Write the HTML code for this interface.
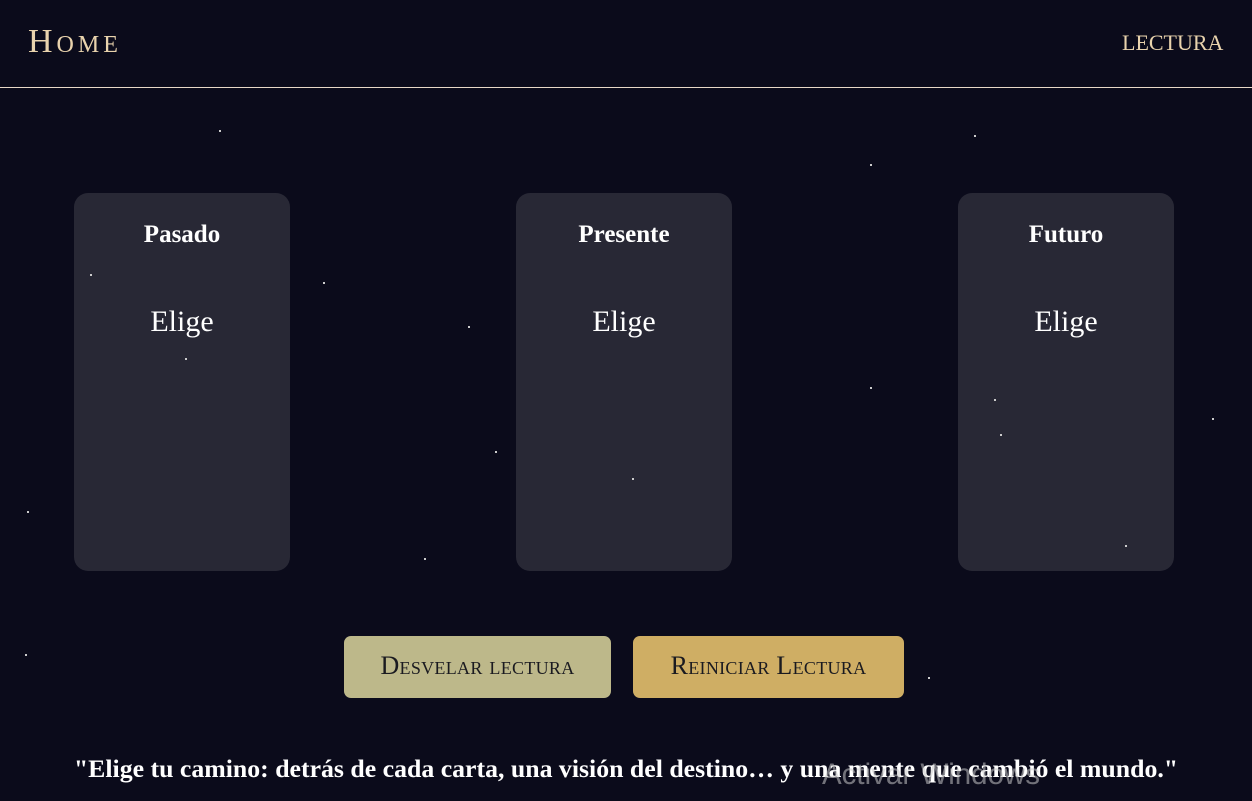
<!DOCTYPE html>
<html><head><meta charset="utf-8"><style>
body{margin:0;width:1252px;height:801px;background:#0b0b1b;overflow:hidden;position:relative;font-family:"Liberation Serif",serif;}
.nav{position:absolute;left:0;top:0;width:1252px;height:87px;border-bottom:1px solid #e8d9c8;}
.home{position:absolute;left:28px;top:23px;font-size:34px;color:#e9d3ad;font-variant:small-caps;letter-spacing:4px}
.lect{position:absolute;left:1122px;top:30px;font-size:22px;color:#e9d3ad;font-variant:small-caps;}
.card{position:absolute;top:193px;width:216px;height:378px;background:#282835;border-radius:14px;color:#fff;text-align:center}
.card h3{margin:0;position:absolute;top:28px;width:100%;font-size:25px;font-weight:bold}
.card p{margin:0;position:absolute;top:112px;width:100%;font-size:30px}
.btn{position:absolute;top:636px;height:62px;border-radius:7px;font-variant:small-caps;font-size:26px;color:#1a1a20;line-height:60px;text-align:center;letter-spacing:.3px}
.q{position:absolute;top:754px;width:100%;text-align:center;color:#fff;font-weight:bold;font-size:25.8px}
.w{position:absolute;left:822px;top:758px;font-family:"Liberation Sans",sans-serif;font-size:29.5px;color:rgba(200,200,200,.55)}
.s{position:absolute;width:2px;height:2px;background:#ccc}
</style></head><body>
<div class="nav"><div class="home">Home</div><div class="lect">LECTURA</div></div>
<div class="card" style="left:74px"><h3>Pasado</h3><p>Elige</p></div>
<div class="card" style="left:516px"><h3>Presente</h3><p>Elige</p></div>
<div class="card" style="left:958px"><h3>Futuro</h3><p>Elige</p></div>
<div class="btn" style="left:344px;width:267px;background:#bdb88a">Desvelar lectura</div>
<div class="btn" style="left:633px;width:271px;background:#cfae64">Reiniciar Lectura</div>
<div class="q">"Elige tu camino: detrás de cada carta, una visión del destino… y una mente que cambió el mundo."</div>
<div class="w">Activar Windows</div>
<div class="s" style="left:219px;top:130px"></div><div class="s" style="left:870px;top:164px"></div>
<div class="s" style="left:974px;top:135px"></div><div class="s" style="left:90px;top:274px"></div>
<div class="s" style="left:185px;top:358px"></div><div class="s" style="left:468px;top:326px"></div>
<div class="s" style="left:495px;top:451px"></div><div class="s" style="left:27px;top:511px"></div>
<div class="s" style="left:1000px;top:434px"></div><div class="s" style="left:994px;top:399px"></div>
<div class="s" style="left:424px;top:558px"></div><div class="s" style="left:1212px;top:418px"></div>
<div class="s" style="left:928px;top:677px"></div><div class="s" style="left:323px;top:282px"></div>
<div class="s" style="left:25px;top:654px"></div><div class="s" style="left:632px;top:478px"></div>
<div class="s" style="left:870px;top:387px"></div><div class="s" style="left:1125px;top:545px"></div>
</body></html>
